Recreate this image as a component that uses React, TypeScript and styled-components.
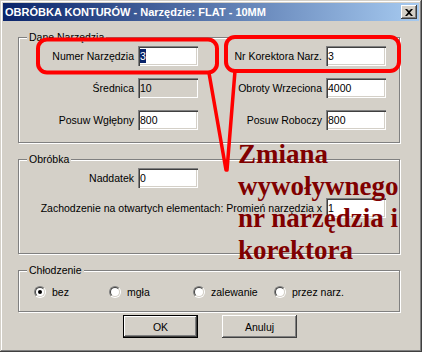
import React from "react";
import styled, { createGlobalStyle, css } from "styled-components";

const GlobalStyle = createGlobalStyle`
  html, body { margin: 0; padding: 0; background: #d4d0c8; }
  * { box-sizing: border-box; }
`;

const Window = styled.div`
  position: relative;
  width: 422px;
  height: 352px;
  padding: 3px;
  background: #d4d0c8;
  box-shadow: inset -1px -1px #404040, inset 1px 1px #d4d0c8,
    inset -2px -2px #808080, inset 2px 2px #ffffff;
  font-family: "Liberation Sans", Arial, sans-serif;
  font-size: 10.5px;
  color: #000;
  overflow: hidden;
`;

const TitleBar = styled.div`
  height: 18px;
  display: flex;
  align-items: center;
  justify-content: space-between;
  padding: 0 2px;
  background: linear-gradient(to right, #0a246a, #a6caf0);
`;

const TitleText = styled.span`
  color: #fff;
  font-weight: bold;
  font-size: 11px;
  white-space: nowrap;
`;

const CloseButton = styled.div`
  width: 16px;
  height: 14px;
  display: flex;
  align-items: center;
  justify-content: center;
  background: #d4d0c8;
  box-shadow: inset -1px -1px #404040, inset 1px 1px #ffffff,
    inset -2px -2px #808080, inset 2px 2px #d4d0c8;
`;

const Body = styled.div`
  display: flex;
  flex-direction: column;
  padding: 16px 19px 0 15px;
`;

const Group = styled.div<{ $mt?: number; $pt: number; $pb: number }>`
  position: relative;
  margin-top: ${(p) => p.$mt ?? 0}px;
  padding-top: ${(p) => p.$pt}px;
  padding-bottom: ${(p) => p.$pb}px;
  border: 1px solid #808080;
  box-shadow: 1px 1px 0 #ffffff, inset 1px 1px 0 #ffffff;
`;

const Legend = styled.span`
  position: absolute;
  top: -7px;
  left: 8px;
  padding: 0 2px;
  line-height: 13px;
  background: #d4d0c8;
  white-space: nowrap;
`;

const FieldGrid = styled.div<{ $rowGap: number }>`
  display: grid;
  grid-template-columns: 115px 60px 120px 60px;
  column-gap: 4px;
  row-gap: ${(p) => p.$rowGap}px;
  align-items: center;
`;

const Label = styled.span<{ $span?: string }>`
  justify-self: end;
  white-space: nowrap;
  ${(p) =>
    p.$span &&
    css`
      grid-column: ${p.$span};
    `}
`;

const Edit = styled.div<{ $disabled?: boolean; $col?: number }>`
  width: 60px;
  height: 20px;
  padding: 2px 2px 2px 2px;
  display: flex;
  align-items: center;
  white-space: nowrap;
  background: ${(p) => (p.$disabled ? "#d4d0c8" : "#ffffff")};
  box-shadow: inset 1px 1px #808080, inset 2px 2px #404040,
    inset -1px -1px #ffffff, inset -2px -2px #d4d0c8;
  ${(p) =>
    p.$col &&
    css`
      grid-column: ${p.$col};
    `}
`;

const Selected = styled.span`
  display: inline-block;
  line-height: 14px;
  background: #0a246a;
  color: #fff;
`;

const RadioRow = styled.div`
  display: grid;
  grid-template-columns: 75px 84px 81px auto;
  align-items: center;
  height: 16px;
  padding-left: 15px;
`;

const RadioItem = styled.label`
  display: flex;
  align-items: center;
  gap: 6px;
  white-space: nowrap;
`;

const RadioCircle = styled.span<{ $checked?: boolean }>`
  position: relative;
  width: 12px;
  height: 12px;
  border-radius: 50%;
  border: 1px solid;
  border-color: #808080 #ffffff #ffffff #808080;
  flex: none;
  &::before {
    content: "";
    position: absolute;
    inset: 0;
    border-radius: 50%;
    border: 1px solid;
    border-color: #404040 #d4d0c8 #d4d0c8 #404040;
    background: #fff;
  }
  &::after {
    content: "";
    display: ${(p) => (p.$checked ? "block" : "none")};
    position: absolute;
    left: 3px;
    top: 3px;
    width: 4px;
    height: 4px;
    border-radius: 50%;
    background: #000;
  }
`;

const ButtonRow = styled.div`
  display: flex;
  justify-content: center;
  gap: 24px;
  margin-top: 3px;
  padding-left: 2px;
`;

const Button = styled.div<{ $default?: boolean }>`
  width: 75px;
  height: 23px;
  display: flex;
  align-items: center;
  justify-content: center;
  background: #d4d0c8;
  ${(p) =>
    p.$default
      ? css`
          border: 1px solid #000;
          box-shadow: inset -1px -1px #404040, inset 1px 1px #ffffff,
            inset -2px -2px #808080;
        `
      : css`
          box-shadow: inset -1px -1px #404040, inset 1px 1px #ffffff,
            inset -2px -2px #808080, inset 2px 2px #d4d0c8;
        `}
`;

const Overlay = styled.svg`
  position: absolute;
  left: 0;
  top: 0;
  pointer-events: none;
`;

const Annotation = styled.div`
  position: absolute;
  left: 238px;
  top: 138px;
  font-family: "Liberation Serif", "Times New Roman", serif;
  font-weight: bold;
  font-size: 27px;
  line-height: 32px;
  color: #800000;
  white-space: nowrap;
  pointer-events: none;
`;

export default function App() {
  return (
    <>
      <GlobalStyle />
      <Window>
        <TitleBar>
          <TitleText>OBRÓBKA KONTURÓW - Narzędzie: FLAT - 10MM</TitleText>
          <CloseButton>
            <svg width="8" height="7" viewBox="0 0 8 7">
              <path
                d="M0 0h2l2 2 2-2h2L5 3.5 8 7H6L4 5 2 7H0l3-3.5z"
                fill="#000"
              />
            </svg>
          </CloseButton>
        </TitleBar>
        <Body>
          <Group $pt={8} $pb={12}>
            <Legend>Dane Narzędzia</Legend>
            <FieldGrid $rowGap={12}>
              <Label>Numer Narzędzia</Label>
              <Edit>
                <Selected>3</Selected>
              </Edit>
              <Label>Nr Korektora Narz.</Label>
              <Edit>3</Edit>
              <Label>Średnica</Label>
              <Edit $disabled>10</Edit>
              <Label>Obroty Wrzeciona</Label>
              <Edit>4000</Edit>
              <Label>Posuw Wgłębny</Label>
              <Edit>800</Edit>
              <Label>Posuw Roboczy</Label>
              <Edit>800</Edit>
            </FieldGrid>
          </Group>
          <Group $mt={16} $pt={8} $pb={35}>
            <Legend>Obróbka</Legend>
            <FieldGrid $rowGap={10}>
              <Label>Naddatek</Label>
              <Edit>0</Edit>
              <Label $span="1 / 4">
                Zachodzenie na otwartych elementach: Promień narzędzia x
              </Label>
              <Edit $col={4}>1</Edit>
            </FieldGrid>
          </Group>
          <Group $mt={16} $pt={13} $pb={11}>
            <Legend>Chłodzenie</Legend>
            <RadioRow>
              <RadioItem>
                <RadioCircle $checked />
                bez
              </RadioItem>
              <RadioItem>
                <RadioCircle />
                mgła
              </RadioItem>
              <RadioItem>
                <RadioCircle />
                zalewanie
              </RadioItem>
              <RadioItem>
                <RadioCircle />
                przez narz.
              </RadioItem>
            </RadioRow>
          </Group>
          <ButtonRow>
            <Button $default>OK</Button>
            <Button>Anuluj</Button>
          </ButtonRow>
        </Body>
        <Overlay width="422" height="352" viewBox="0 0 422 352">
          <rect
            x="38"
            y="39.5"
            width="179"
            height="33"
            rx="9"
            fill="none"
            stroke="#ff0000"
            strokeWidth="4"
          />
          <rect
            x="226"
            y="37"
            width="173"
            height="34"
            rx="9"
            fill="none"
            stroke="#ff0000"
            strokeWidth="4"
          />
          <path
            d="M209 73 L226 170 M235 71 L227 170"
            fill="none"
            stroke="#ff0000"
            strokeWidth="3.5"
            strokeLinecap="round"
          />
        </Overlay>
        <Annotation>
          Zmiana
          <br />
          wywoływnego
          <br />
          nr narzędzia i
          <br />
          korektora
        </Annotation>
      </Window>
    </>
  );
}
